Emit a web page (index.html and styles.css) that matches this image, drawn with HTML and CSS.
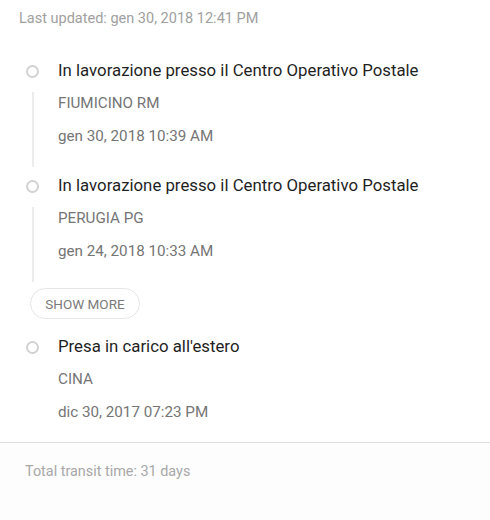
FILE: index.html
```html
<!DOCTYPE html>
<html>
<head>
<meta charset="utf-8">
<link rel="stylesheet" href="styles.css">
</head>
<body>
<div class="page">
  <div class="updated">Last updated: gen 30, 2018 12:41 PM</div>
  <div class="timeline">
    <div class="event">
      <div class="marker"><span class="dot"></span><span class="rail"></span></div>
      <div class="info">
        <div class="title">In lavorazione presso il Centro Operativo Postale</div>
        <div class="meta">FIUMICINO RM</div>
        <div class="meta">gen 30, 2018 10:39 AM</div>
      </div>
    </div>
    <div class="event">
      <div class="marker"><span class="dot"></span><span class="rail"></span></div>
      <div class="info">
        <div class="title">In lavorazione presso il Centro Operativo Postale</div>
        <div class="meta">PERUGIA PG</div>
        <div class="meta">gen 24, 2018 10:33 AM</div>
      </div>
    </div>
    <button class="more">SHOW MORE</button>
    <div class="event last">
      <div class="marker"><span class="dot"></span></div>
      <div class="info">
        <div class="title">Presa in carico all'estero</div>
        <div class="meta">CINA</div>
        <div class="meta">dic 30, 2017 07:23 PM</div>
      </div>
    </div>
  </div>
  <div class="footer">Total transit time: 31 days</div>
</div>
</body>
</html>
```
FILE: styles.css
```css
html, body {
  margin: 0;
  padding: 0;
  background: #ffffff;
}
body {
  font-family: Roboto, "Noto Sans", Arial, sans-serif;
  width: 490px;
  height: 520px;
  overflow: hidden;
}
.updated {
  padding: 9px 0 0 19px;
  font-size: 14.5px;
  line-height: 20px;
  color: #a0a0a0;
  margin-bottom: 29px;
}
.timeline {
  display: flex;
  flex-direction: column;
  align-items: flex-start;
}
.event {
  display: grid;
  grid-template-columns: 58px 1fr;
  height: 115px;
  width: 100%;
}
.event.last {
  height: auto;
  padding-bottom: 13px;
  border-bottom: 1px solid #dedede;
}
.marker {
  display: flex;
  flex-direction: column;
  align-items: center;
  width: 13px;
  margin-left: 26px;
}
.dot {
  margin-top: 7px;
  width: 9px;
  height: 9px;
  border: 2px solid #d2d2d2;
  border-radius: 50%;
  flex: none;
}
.rail {
  margin-top: 14px;
  width: 2px;
  height: 75px;
  background: #ececec;
}
.title {
  font-size: 16.8px;
  line-height: 24px;
  color: #1f1f1f;
  white-space: nowrap;
  margin-bottom: 5px;
}
.meta {
  font-size: 15.2px;
  line-height: 33px;
  color: #757575;
}
.more {
  margin: 0 0 15px 30px;
  width: 110px;
  height: 31px;
  border: 1px solid #e6e6e6;
  border-radius: 16px;
  background: #ffffff;
  font-family: Roboto, "Noto Sans", Arial, sans-serif;
  font-size: 13.5px;
  color: #7a7a7a;
  padding: 0;
  letter-spacing: 0;
}
.footer {
  padding: 19px 0 0 25px;
  font-size: 14.4px;
  line-height: 20px;
  color: #a8a8a8;
  background: #fdfdfd;
  height: 80px;
}
```
